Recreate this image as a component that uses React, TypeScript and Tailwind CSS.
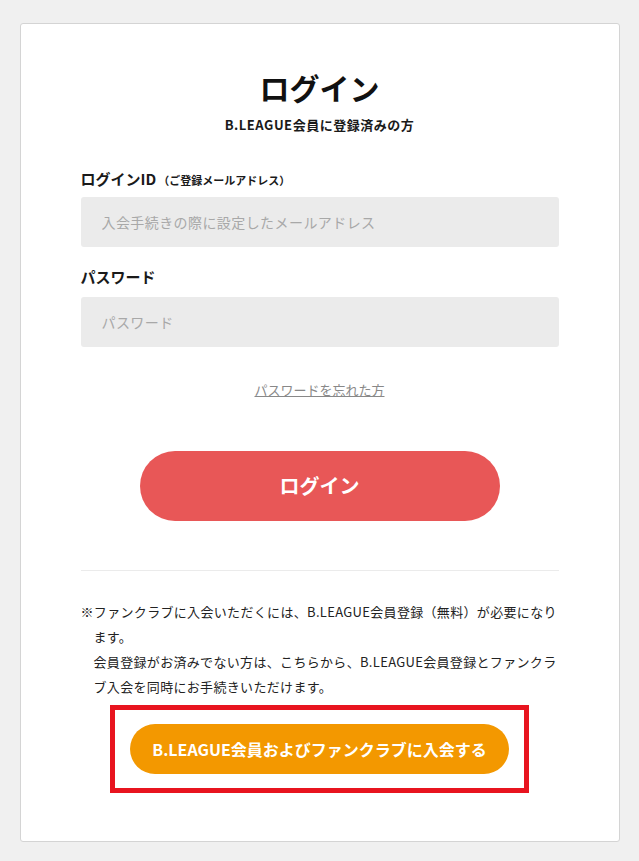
import React from "react";

const font = {
  fontFamily: '"Noto Sans CJK JP", "Noto Sans", sans-serif',
};

export default function App() {
  return (
    <div
      className="min-h-[861px] bg-[#f0f0f0] pt-[23px] pb-[21px] text-[#1a1a1a]"
      style={font}
    >
      <div className="mx-auto w-[600px] rounded-[3px] border border-[#d4d4d4] bg-white px-[60px] pt-[42px] pb-[48px]">
        {/* 見出し */}
        <h1 className="text-center text-[30px] font-bold leading-[42px] text-[#111]">
          ログイン
        </h1>
        <p className="mt-[7px] text-center text-[13px] font-bold leading-[20px] tracking-[0.04em]">
          B.LEAGUE会員に登録済みの方
        </p>

        {/* フォーム */}
        <form className="mt-[33px]" onSubmit={(e) => e.preventDefault()}>
          <label className="block text-[15px] font-bold leading-[21px]">
            ログインID
            <span className="ml-[2px] text-[11px]">（ご登録メールアドレス）</span>
          </label>
          <input
            type="email"
            placeholder="入会手続きの際に設定したメールアドレス"
            className="mt-[6px] block h-[50px] w-full rounded-[3px] bg-[#ebebeb] px-[21px] text-[14px] tracking-[0.03em] outline-none placeholder:text-[#a8a8a8]"
          />

          <label className="mt-[19px] block text-[15px] font-bold leading-[21px]">
            パスワード
          </label>
          <input
            type="password"
            placeholder="パスワード"
            className="mt-[10px] block h-[50px] w-full rounded-[3px] bg-[#ebebeb] px-[21px] text-[14px] tracking-[0.03em] outline-none placeholder:text-[#a8a8a8]"
          />

          <div className="mt-[31px] text-center leading-[20px]">
            <a href="#" className="text-[13px] text-[#888] underline">
              パスワードを忘れた方
            </a>
          </div>

          <button
            type="submit"
            className="mx-auto mt-[51px] flex h-[70px] w-[360px] items-center justify-center rounded-full bg-[#e85757] text-[20px] font-bold text-white"
          >
            ログイン
          </button>
        </form>

        <div className="mt-[49px] h-px bg-[#ebebeb]" />

        {/* 注意書き */}
        <div className="mt-[28px] pl-[1em] text-[13px] leading-[25px] tracking-[0.025em] text-[#222]">
          <p className="-indent-[1em]">
            ※ファンクラブに入会いただくには、B.LEAGUE会員登録（無料）が必要になります。
          </p>
          <p>
            会員登録がお済みでない方は、こちらから、B.LEAGUE会員登録とファンクラブ入会を同時にお手続きいただけます。
          </p>
        </div>

        <div className="mx-auto mt-[6px] flex w-[419px] justify-center border-[5px] border-[#e8141f] py-[14px]">
          <button
            type="button"
            className="flex h-[50px] w-[379px] items-center justify-center rounded-full bg-[#f39800] text-[16px] font-bold text-white"
          >
            B.LEAGUE会員およびファンクラブに入会する
          </button>
        </div>
      </div>
    </div>
  );
}
